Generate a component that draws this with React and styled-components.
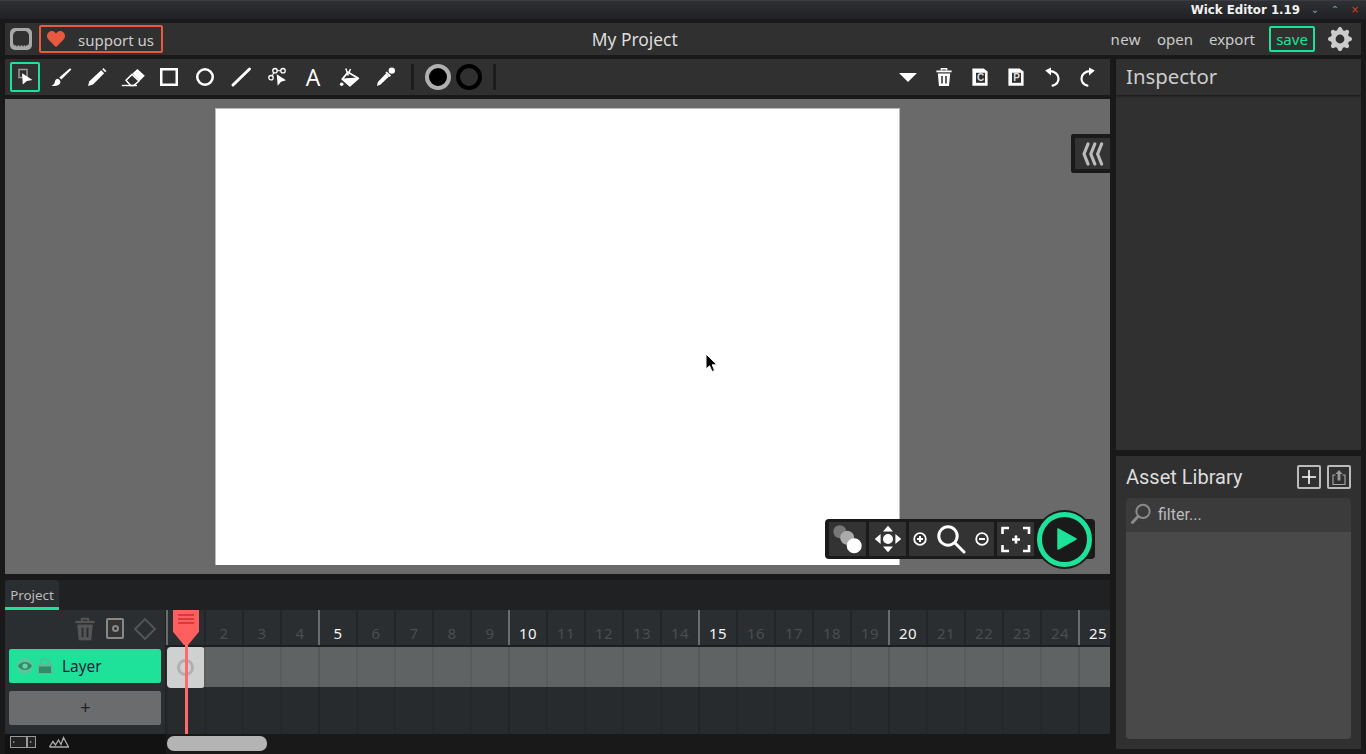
import React from "react";
import styled, { createGlobalStyle } from "styled-components";
import { FaHeart } from "react-icons/fa";
import { BsGearFill } from "react-icons/bs";

const GREEN = "#1ee29a";
const FRAMES = Array.from({ length: 25 }, (_, i) => i + 1);

const GlobalStyle = createGlobalStyle`
  html, body {
    margin: 0;
    height: 754px;
    overflow: hidden;
    background: #191919;
  }
  * { box-sizing: border-box; }
`;

function Icon({ children, w = 24, h = 24, box }) {
  return (
    <svg width={w} height={h} viewBox={box || `0 0 ${w} ${h}`} fill="none" style={{ display: "block" }}>
      {children}
    </svg>
  );
}

const SelectIcon = () => (
  <Icon>
    <rect x="6" y="4.5" width="8" height="8" stroke="#999" strokeWidth="1.5" />
    <path d="M9 8.3L19.5 15L13.8 16L9.8 19.5Z" fill="#fff" />
  </Icon>
);
const BrushIcon = () => (
  <Icon>
    <path d="M21 3.2L22.4 4.6L12.4 14.6L10.2 12.6Z" fill="#fff" />
    <path d="M9 13.8C6 14 6 16.8 5.4 18.4C5 19.3 4 19.8 2.6 20.4C5.6 21.4 9.6 21 11 18.6C11.9 17 11.4 15 9 13.8Z" fill="#fff" />
  </Icon>
);
const PencilIcon = () => (
  <Icon>
    <path d="M18.4 3L21.4 6L20.2 7.2L17.2 4.2Z" fill="#fff" />
    <path d="M16.2 5.2L19.2 8.2L8 19.6L3 21L4.4 16.2Z" fill="#fff" />
  </Icon>
);
const EraserIcon = () => (
  <Icon>
    <path d="M11.4 8.4L16.4 4L23.8 10.8L18.6 16Z" fill="#fff" />
    <path d="M11 9.4L18 16L13 20.4H9.6L5 15.2Z" stroke="#fff" strokeWidth="1.5" strokeLinejoin="round" />
    <path d="M.8 20.5H16" stroke="#fff" strokeWidth="1.4" />
  </Icon>
);
const RectIcon = () => (
  <Icon>
    <rect x="4.25" y="4.25" width="15.5" height="15.5" stroke="#fff" strokeWidth="2.5" />
  </Icon>
);
const CircleIcon = () => (
  <Icon>
    <circle cx="12" cy="12" r="7.75" stroke="#fff" strokeWidth="2.5" />
  </Icon>
);
const LineIcon = () => (
  <Icon>
    <path d="M4 20L20.5 4" stroke="#fff" strokeWidth="3" strokeLinecap="round" />
  </Icon>
);
const PathIcon = () => (
  <Icon>
    <path d="M6 12.7L10 5.7H18" stroke="#ddd" strokeWidth="1.3" />
    <circle cx="6" cy="12.7" r="2.2" fill="#303030" stroke="#fff" strokeWidth="1.3" />
    <circle cx="10" cy="5.7" r="2.2" fill="#303030" stroke="#fff" strokeWidth="1.3" />
    <circle cx="18" cy="5.7" r="2.2" fill="#303030" stroke="#fff" strokeWidth="1.3" />
    <path d="M11.7 9.3L21 15.3L16 16.7L12.7 20.7Z" fill="#fff" />
  </Icon>
);
const BucketIcon = () => (
  <Icon>
    <path d="M11 7.3L21.3 13.3L13 20.7L5.3 14Z" stroke="#fff" strokeWidth="1.8" strokeLinejoin="round" />
    <path d="M5.8 13.4L20.8 12.6L21.3 13.3L13 20.7Z" fill="#fff" />
    <path d="M11.3 10.5L8.8 3.4M11.6 8L13.6 4" stroke="#fff" strokeWidth="1.5" />
    <circle cx="4.7" cy="19.2" r="1.8" fill="#fff" />
  </Icon>
);
const DropperIcon = () => (
  <Icon>
    <circle cx="18.8" cy="5.6" r="3.2" fill="#fff" />
    <path d="M13.8 6.4L18 10.6L16.6 12L12.4 7.8Z" fill="#fff" />
    <path d="M13 8.4L16 11.4L7.6 19.6L4 21L4.8 17Z" fill="#fff" />
  </Icon>
);
const TrashIcon = ({ color = "#fff", size = 24 }) => (
  <Icon w={size} h={size} box="0 0 24 24">
    <path d="M4.4 6.4H19.6" stroke={color} strokeWidth="1.8" />
    <path d="M9.4 5.6V3.8H14.6V5.6" stroke={color} strokeWidth="1.5" />
    <path d="M5.8 8.4H18.2L17 21H7Z" fill={color} />
    <path d="M10 11V18.6M14 11V18.6" stroke="#2b2e30" strokeWidth="1.5" />
  </Icon>
);
const DocIcon = ({ letter }) => (
  <Icon>
    <path d="M4.4 3.4H15.6L19.6 6.6V20.8H4.4Z" fill="#fff" />
    <rect x="8" y="7.8" width="9" height="10" fill="#303030" />
    <text x="12.5" y="16.4" textAnchor="middle" fontFamily="'Liberation Sans', sans-serif" fontWeight="700" fontSize="10" fill="#ddd">{letter}</text>
  </Icon>
);
const UndoIcon = ({ flip }) => (
  <Icon>
    <g transform={flip ? "matrix(-1 0 0 1 24 0)" : undefined}>
      <path d="M9.5 6.2C15 6.2 18.5 9.4 18.5 13.4C18.5 16.6 16.4 19.4 12.6 20.6" stroke="#fff" strokeWidth="2.2" strokeLinecap="round" />
      <path d="M11 2.6V10.4L5.2 5.6Z" fill="#fff" />
    </g>
  </Icon>
);
const Chevrons = () => (
  <svg width="22" height="24" viewBox="0 0 22 24" fill="none">
    {[6, 12.8, 19.6].map((x) => (
      <path key={x} d={`M${x} 2L${x - 4} 12L${x} 22`} stroke="#bbb" strokeWidth="3.2" strokeLinecap="round" strokeLinejoin="round" />
    ))}
  </svg>
);
const LayersIcon = () => (
  <Icon w={34} h={34}>
    <circle cx="8.8" cy="9.7" r="6.5" fill="#777" />
    <circle cx="16.2" cy="15.7" r="7" fill="#aaa" />
    <circle cx="23.2" cy="23.7" r="7.5" fill="#fff" />
  </Icon>
);
const MoveIcon = () => (
  <Icon w={34} h={34}>
    <circle cx="17" cy="17" r="5" fill="#fff" />
    <path d="M17 3.8L22 9.6H12ZM17 30.2L22 24.4H12ZM3.8 17L9.6 12V22ZM30.2 17L24.4 12V22Z" fill="#fff" />
  </Icon>
);
const RoundSign = ({ plus }) => (
  <Icon w={14} h={14}>
    <circle cx="7" cy="7" r="5.8" stroke="#fff" strokeWidth="1.8" />
    <path d={plus ? "M4 7H10M7 4V10" : "M4 7H10"} stroke="#fff" strokeWidth="2" />
  </Icon>
);
const Magnifier = () => (
  <Icon w={30} h={30}>
    <circle cx="12" cy="12" r="9.2" stroke="#fff" strokeWidth="3" />
    <path d="M19 19L28 28" stroke="#fff" strokeWidth="3" strokeLinecap="round" />
  </Icon>
);
const RecenterIcon = () => (
  <Icon w={34} h={34}>
    <path d="M3.5 12V6H10M24 6H30V12M30 23V29H24M10 29H3.5V23" stroke="#fff" strokeWidth="2.6" />
    <path d="M13 17.5H21M17 13.5V21.5" stroke="#fff" strokeWidth="2.6" />
  </Icon>
);
const EyeIcon = () => (
  <Icon w={16} h={16}>
    <circle cx="8" cy="8" r="8" fill="#5fc49e" />
    <path d="M1 8C4.4 2.6 11.6 2.6 15 8C11.6 13.4 4.4 13.4 1 8Z" fill="#2f8c68" />
    <circle cx="8" cy="8" r="2.6" fill="#6bcfa8" />
  </Icon>
);
const LockIcon = () => (
  <Icon w={16} h={16}>
    <rect x="0.5" y="6" width="15" height="10" fill="#58bd97" />
    <rect x="2" y="8.5" width="12" height="6.5" fill="#2f8c68" />
    <path d="M4 6V3.5C4 .6 12 .6 12 3.5V6" stroke="#58bd97" strokeWidth="2" />
  </Icon>
);
const CurveIcon = () => (
  <svg width="20" height="12" viewBox="0 0 20 12" fill="none" style={{ display: "block" }}>
    <path d="M.5 11L4 5.5L6.5 9L9.5 4L12 8.5L14.5 1.5L19.5 11H.5" stroke="#aaa" strokeWidth="1.3" />
  </svg>
);
const RulerToggleIcon = () => (
  <svg width="26" height="12" viewBox="0 0 26 12" fill="none" style={{ display: "block" }}>
    <rect x=".5" y=".5" width="16" height="11" fill="#222" stroke="#999" />
    <rect x="17.5" y=".5" width="8" height="11" fill="#222" stroke="#999" />
    <path d="M3 5L5 6L3 7ZM20 5L22 6L20 7Z" fill="#aaa" />
  </svg>
);
const SearchIcon = () => (
  <svg width="22" height="22" viewBox="0 0 22 22" fill="none" style={{ display: "block" }}>
    <circle cx="13" cy="8.4" r="6.6" stroke="#8a8a8a" strokeWidth="2" />
    <path d="M8 13.4L2.4 19.4" stroke="#8a8a8a" strokeWidth="3" strokeLinecap="round" />
  </svg>
);
const UploadIcon = () => (
  <svg width="16" height="18" viewBox="0 0 16 18" fill="none" style={{ display: "block" }}>
    <path d="M4.5 7H2V16.5H14V7H11.5" stroke="#aaa" strokeWidth="1.1" />
    <path d="M8 2L11.5 6H9.4V12.5H6.6V6H4.5Z" fill="#999" />
  </svg>
);

function App() {
  const toolsBefore = [BrushIcon, PencilIcon, EraserIcon, RectIcon, CircleIcon, LineIcon, PathIcon];

  return (
    <>
      <GlobalStyle />
      <Page>
        <TitleBar>
          <AppName>Wick Editor 1.19</AppName>
          <WindowButton>⌄</WindowButton>
          <WindowButton>⌃</WindowButton>
          <WindowButton $close>×</WindowButton>
        </TitleBar>

        <Workspace>
          <MenuBar>
            <MenuGroup>
              <Logo>
                <svg width="22" height="22" viewBox="0 0 22 22">
                  <rect width="22" height="22" rx="5" fill="#a8a8a8" />
                  <path d="M8 3H14C17 3 19 5 19 8V14C19 16.5 17.5 18.5 15 18.5H7C4.5 18.5 3 16.5 3 14V8C3 5 5 3 8 3Z" fill="#303030" />
                  {[5.5, 8.5, 11.5, 14.5, 17].map((x) => (
                    <circle key={x} cx={x} cy="18.4" r="1.1" fill="#a8a8a8" />
                  ))}
                </svg>
              </Logo>
              <SupportButton>
                <FaHeart size={18} color="#e9593f" />
                <span>support us</span>
              </SupportButton>
            </MenuGroup>
            <ProjectName>My Project</ProjectName>
            <MenuGroup>
              <MenuLink>new</MenuLink>
              <MenuLink>open</MenuLink>
              <MenuLink>export</MenuLink>
              <SaveButton>save</SaveButton>
              <GearWrap>
                <BsGearFill size={24} color="#ccc" />
              </GearWrap>
            </MenuGroup>
          </MenuBar>

          <Main>
            <LeftColumn>
              <Toolbar>
                <ToolGroup>
                  <ToolButton $active><SelectIcon /></ToolButton>
                  {toolsBefore.map((Tool, i) => (
                    <ToolButton key={i}><Tool /></ToolButton>
                  ))}
                  <TextTool>A</TextTool>
                  <ToolButton><BucketIcon /></ToolButton>
                  <ToolButton><DropperIcon /></ToolButton>
                  <ToolDivider />
                  <FillSwatch />
                  <StrokeSwatch />
                  <ToolDivider />
                </ToolGroup>
                <ToolGroup>
                  <ToolButton><Caret /></ToolButton>
                  <ToolButton><TrashIcon /></ToolButton>
                  <ToolButton><DocIcon letter="C" /></ToolButton>
                  <ToolButton><DocIcon letter="P" /></ToolButton>
                  <ToolButton><UndoIcon /></ToolButton>
                  <ToolButton><UndoIcon flip /></ToolButton>
                </ToolGroup>
              </Toolbar>

              <Canvas>
                <Paper />
                <CollapseTab><Chevrons /></CollapseTab>
                <Cursor>
                  <svg width="14" height="20" viewBox="0 0 14 20">
                    <path d="M1 1V16L4.6 12.8L7 18.6L9.6 17.4L7.2 11.8H12Z" fill="#000" stroke="#fff" strokeWidth="1" />
                  </svg>
                </Cursor>
                <CanvasControls>
                  <ControlButton><LayersIcon /></ControlButton>
                  <ControlButton><MoveIcon /></ControlButton>
                  <ZoomGroup>
                    <RoundSign plus />
                    <Magnifier />
                    <RoundSign />
                  </ZoomGroup>
                  <ControlButton><RecenterIcon /></ControlButton>
                  <PlayButton>
                    <svg width="20" height="24" viewBox="0 0 20 24">
                      <path d="M1 2L19 12L1 22Z" fill={GREEN} stroke={GREEN} strokeWidth="1.5" strokeLinejoin="round" />
                    </svg>
                  </PlayButton>
                </CanvasControls>
              </Canvas>

              <Timeline>
                <TabRow>
                  <Tab>Project</Tab>
                </TabRow>
                <TimelineBody>
                  <LayerPanel>
                    <LayerActions>
                      <LayerAction><TrashIcon color="#555" size={30} /></LayerAction>
                      <FrameToggle><span /></FrameToggle>
                      <Diamond />
                    </LayerActions>
                    <LayerButton>
                      <EyeIcon />
                      <LockIcon />
                      <LayerName>Layer</LayerName>
                    </LayerButton>
                    <AddLayer>+</AddLayer>
                  </LayerPanel>

                  <Frames>
                    <Ruler>
                      {FRAMES.map((n) => (
                        <RulerCell key={n} $major={n === 1 || n % 5 === 0}>
                          {n > 1 && n}
                        </RulerCell>
                      ))}
                    </Ruler>
                    <FrameRow>
                      {FRAMES.map((n) =>
                        n === 1 ? (
                          <FilledFrame key={n}><FrameRing /></FilledFrame>
                        ) : (
                          <FrameCell key={n} $major={n % 5 === 0} />
                        )
                      )}
                    </FrameRow>
                    <EmptyRow>
                      {FRAMES.map((n) => (
                        <EmptyCell key={n} $major={n % 5 === 0} />
                      ))}
                    </EmptyRow>
                    <Playhead>
                      <PlayheadTop />
                      <PlayheadLine />
                    </Playhead>
                  </Frames>

                  <TimelineFooter>
                    <RulerToggleIcon />
                    <CurveIcon />
                  </TimelineFooter>
                  <ScrollTrack>
                    <ScrollThumb />
                  </ScrollTrack>
                </TimelineBody>
              </Timeline>
            </LeftColumn>

            <RightColumn>
              <Inspector>
                <InspectorTitle>Inspector</InspectorTitle>
              </Inspector>
              <AssetLibrary>
                <AssetHeader>
                  <AssetTitle>Asset Library</AssetTitle>
                  <AssetButtons>
                    <AssetButton>
                      <svg width="16" height="16" viewBox="0 0 16 16">
                        <path d="M8 1V15M1 8H15" stroke="#fff" strokeWidth="1.6" />
                      </svg>
                    </AssetButton>
                    <AssetButton><UploadIcon /></AssetButton>
                  </AssetButtons>
                </AssetHeader>
                <AssetSearch>
                  <SearchIcon />
                  <span>filter...</span>
                </AssetSearch>
                <AssetList />
              </AssetLibrary>
            </RightColumn>
          </Main>
        </Workspace>
      </Page>
    </>
  );
}

const Page = styled.div`
  width: 1366px;
  height: 754px;
  display: flex;
  flex-direction: column;
  overflow: hidden;
  font-family: "Noto Sans", sans-serif;
  color: #ccc;
`;

const TitleBar = styled.div`
  height: 19px;
  display: flex;
  align-items: center;
  justify-content: flex-end;
  padding-right: 1px;
  background: linear-gradient(#2e3033, #1f2124);
  border-top: 1px solid #3a3c3f;
`;

const AppName = styled.div`
  font-family: "DejaVu Sans", sans-serif;
  font-weight: 700;
  font-size: 11.8px;
  color: #f2f2f2;
  margin-right: 5px;
`;

const WindowButton = styled.div`
  width: 20px;
  text-align: center;
  font-family: "DejaVu Sans", sans-serif;
  font-size: 10px;
  line-height: 14px;
  color: ${(p) => (p.$close ? "#d8431f" : "#8aa0a8")};
`;

const Workspace = styled.div`
  flex: 1;
  display: flex;
  flex-direction: column;
  gap: 4px;
  padding: 4px 5px 0;
`;

const MenuBar = styled.div`
  height: 32px;
  display: flex;
  align-items: center;
  justify-content: space-between;
  background: #303030;
`;

const MenuGroup = styled.div`
  display: flex;
  align-items: center;
`;

const Logo = styled.div`
  margin-left: 5px;
  height: 22px;
  svg { display: block; }
`;

const SupportButton = styled.div`
  width: 124px;
  height: 28px;
  margin-left: 7px;
  display: flex;
  align-items: center;
  gap: 13px;
  padding-left: 6px;
  border: 2px solid #e9593f;
  border-radius: 2px;
  font-size: 15px;
  color: #ccc;
  span { margin-top: 2px; }
`;

const ProjectName = styled.div`
  font-size: 17.4px;
  color: #ddd;
`;

const MenuLink = styled.div`
  font-size: 15px;
  color: #ccc;
  margin-right: 16px;
  &:first-child {
    padding-left: 4px;
    letter-spacing: 0.4px;
  }
`;

const SaveButton = styled.div`
  width: 46px;
  height: 26px;
  margin-left: -2px;
  display: flex;
  align-items: center;
  justify-content: center;
  border: 2px solid ${GREEN};
  border-radius: 2px;
  font-size: 15px;
  color: ${GREEN};
`;

const GearWrap = styled.div`
  margin: 0 9px 0 13px;
  height: 24px;
`;

const Main = styled.div`
  display: flex;
  gap: 6px;
`;

const LeftColumn = styled.div`
  width: 1105px;
  display: flex;
  flex-direction: column;
`;

const Toolbar = styled.div`
  height: 36px;
  padding: 0 7px 0 5px;
  display: flex;
  align-items: center;
  justify-content: space-between;
  background: #303030;
`;

const ToolGroup = styled.div`
  display: flex;
  align-items: center;
  gap: 6px;
`;

const ToolButton = styled.div`
  width: 30px;
  height: 30px;
  display: flex;
  align-items: center;
  justify-content: center;
  border-radius: 2px;
  border: ${(p) => (p.$active ? `2px solid ${GREEN}` : "none")};
`;

const TextTool = styled.div`
  width: 30px;
  height: 30px;
  text-align: center;
  font-family: "Open Sans", sans-serif;
  font-weight: 500;
  font-size: 23px;
  line-height: 30px;
  color: #fff;
`;

const ToolDivider = styled.div`
  width: 3px;
  height: 26px;
  margin: 0 5px;
  background: #1c1c1c;
`;

const FillSwatch = styled.div`
  width: 26px;
  height: 26px;
  border-radius: 50%;
  background: #000;
  border: 4px solid #b0b0b0;
`;

const StrokeSwatch = styled.div`
  width: 26px;
  height: 26px;
  margin-left: -1px;
  border-radius: 50%;
  border: 4px solid #000;
`;

const Caret = styled.div`
  width: 0;
  height: 0;
  border-left: 9.5px solid transparent;
  border-right: 9.5px solid transparent;
  border-top: 9px solid #fff;
`;

const Canvas = styled.div`
  position: relative;
  height: 475px;
  margin-top: 4px;
  display: flex;
  align-items: center;
  justify-content: center;
  background: #6a6a6a;
`;

const Paper = styled.div`
  width: 685px;
  height: 457px;
  background: #fff;
  border: 1px solid #bbb;
  border-bottom: none;
`;

const CollapseTab = styled.div`
  position: absolute;
  top: 35px;
  right: 0;
  width: 39px;
  height: 39px;
  display: flex;
  align-items: center;
  justify-content: center;
  background: #333;
  border: 4px solid #1a1a1a;
  border-right: none;
  border-radius: 3px 0 0 3px;
`;

const Cursor = styled.div`
  position: absolute;
  left: 700px;
  top: 254px;
  height: 20px;
`;

const CanvasControls = styled.div`
  position: absolute;
  right: 15px;
  bottom: 15px;
  width: 270px;
  height: 40px;
  display: flex;
  align-items: center;
  gap: 3px;
  padding-left: 4px;
  background: #1a1a1a;
  border-radius: 4px;
`;

const ControlButton = styled.div`
  width: 37px;
  height: 34px;
  display: flex;
  align-items: center;
  justify-content: center;
  background: #333;
`;

const ZoomGroup = styled.div`
  width: 85px;
  height: 34px;
  display: flex;
  align-items: center;
  justify-content: space-between;
  padding: 0 5px 0 4px;
  background: #333;
`;

const PlayButton = styled.div`
  width: 55px;
  height: 55px;
  flex: none;
  margin: -7px 0 -7px 0;
  display: flex;
  align-items: center;
  justify-content: center;
  padding-left: 4px;
  border-radius: 50%;
  background: #1a1a1a;
  border: 5px solid ${GREEN};
  box-shadow: 0 0 0 2px #1a1a1a;
`;

const Timeline = styled.div`
  margin-top: 6px;
  display: flex;
  flex-direction: column;
`;

const TabRow = styled.div`
  height: 30px;
  background: #1f2123;
`;

const Tab = styled.div`
  width: 54px;
  height: 30px;
  padding-top: 6px;
  text-align: center;
  font-size: 13.4px;
  line-height: 18px;
  color: #bbb;
  background: #2b2e30;
  border-bottom: 3px solid ${GREEN};
  border-radius: 4px 4px 0 0;
`;

const TimelineBody = styled.div`
  display: grid;
  grid-template-columns: 161px 944px;
  grid-template-rows: 124px 20px;
`;

const LayerPanel = styled.div`
  display: flex;
  flex-direction: column;
  padding: 0 4px;
  background: #2b2e30;
  border-right: 1px solid #1f2123;
`;

const LayerActions = styled.div`
  height: 39px;
  display: flex;
  align-items: center;
  justify-content: flex-end;
  gap: 9px;
  padding: 0 4px 2px 0;
`;

const LayerAction = styled.div`
  height: 30px;
  margin-right: -3px;
`;

const FrameToggle = styled.div`
  width: 18px;
  height: 21px;
  display: flex;
  align-items: center;
  justify-content: center;
  border: 2px solid #888;
  border-radius: 2px;
  background: #333;
  span {
    width: 7px;
    height: 7px;
    border-radius: 50%;
    border: 2px solid #888;
  }
`;

const Diamond = styled.div`
  width: 16px;
  height: 16px;
  margin: 0 4px;
  transform: rotate(45deg);
  border: 2px solid #555;
`;

const LayerButton = styled.div`
  height: 34px;
  display: flex;
  align-items: center;
  gap: 4px;
  padding-left: 8px;
  background: ${GREEN};
  border-radius: 2px;
`;

const LayerName = styled.div`
  margin-left: 5px;
  font-size: 15.4px;
  color: #2a1a3a;
`;

const AddLayer = styled.div`
  height: 34px;
  margin-top: 8px;
  padding-left: 1px;
  text-align: center;
  line-height: 33px;
  font-size: 18px;
  color: #222;
  background: #6a6c6e;
  border-radius: 2px;
`;

const Frames = styled.div`
  position: relative;
  display: flex;
  flex-direction: column;
  overflow: hidden;
  background: #272b2e;
`;

const Ruler = styled.div`
  height: 37px;
  display: flex;
  border-bottom: 2px solid #1c1f21;
`;

const RulerCell = styled.div`
  flex: none;
  width: 38px;
  padding-top: 13px;
  text-align: center;
  font-size: 15px;
  letter-spacing: 0.5px;
  line-height: 20px;
  color: ${(p) => (p.$major ? "#f4f4f4" : "#4a4d4f")};
  background: #2b2e30;
  border-left: 2px solid ${(p) => (p.$major ? "#6a6c6e" : "#232628")};
`;

const FrameRow = styled.div`
  height: 40px;
  display: flex;
`;

const FrameCell = styled.div`
  flex: none;
  width: 38px;
  background: #5f6363;
  border-left: 2px solid ${(p) => (p.$major ? "#54585a" : "#585c5c")};
`;

const FilledFrame = styled.div`
  flex: none;
  width: 38px;
  height: 41px;
  margin-left: 1px;
  margin-right: -1px;
  display: flex;
  align-items: center;
  justify-content: center;
  background: #cfd0d0;
  border-radius: 4px;
`;

const FrameRing = styled.div`
  width: 17px;
  height: 17px;
  margin-left: -1px;
  border-radius: 50%;
  border: 3px solid #b0b0b0;
`;

const EmptyRow = styled.div`
  height: 47px;
  display: flex;
`;

const EmptyCell = styled.div`
  flex: none;
  width: 38px;
  border-left: 2px solid ${(p) => (p.$major ? "#212528" : "#24282b")};
`;

const Playhead = styled.div`
  position: absolute;
  left: 7px;
  top: 0;
  bottom: 0;
  width: 26px;
  display: flex;
  flex-direction: column;
  align-items: center;
`;

const PlayheadTop = styled.div`
  width: 26px;
  height: 35px;
  flex: none;
  clip-path: polygon(0 0, 100% 0, 100% 62%, 58% 100%, 42% 100%, 0 62%);
  background:
    linear-gradient(#d63a3a, #d63a3a) 5px 4px / 16px 2px no-repeat,
    linear-gradient(#d63a3a, #d63a3a) 5px 8px / 16px 2px no-repeat,
    linear-gradient(#d63a3a, #d63a3a) 5px 12px / 16px 2px no-repeat,
    #ff5f5f;
`;

const PlayheadLine = styled.div`
  width: 3px;
  flex: 1;
  background: #ff6a6a;
`;

const TimelineFooter = styled.div`
  display: flex;
  align-items: center;
  gap: 13px;
  padding: 0 0 4px 5px;
  background: #121212;
`;

const ScrollTrack = styled.div`
  padding: 2px 0 0 1px;
  background: #191919;
`;

const ScrollThumb = styled.div`
  width: 100px;
  height: 15px;
  background: #b4b4b4;
  border-radius: 7px;
`;

const RightColumn = styled.div`
  width: 245px;
  display: flex;
  flex-direction: column;
  gap: 6px;
`;

const Inspector = styled.div`
  height: 391px;
  background: #303030;
`;

const InspectorTitle = styled.div`
  height: 36px;
  padding-left: 10px;
  font-size: 20.4px;
  line-height: 34px;
  color: #ccc;
  box-shadow: 0 1px 2px #151515;
`;

const AssetLibrary = styled.div`
  height: 293px;
  display: flex;
  flex-direction: column;
  padding: 0 10px 10px;
  background: #303030;
`;

const AssetHeader = styled.div`
  height: 42px;
  display: flex;
  align-items: center;
  justify-content: space-between;
  flex: none;
`;

const AssetTitle = styled.div`
  font-family: Roboto, sans-serif;
  font-size: 20px;
  color: #ddd;
`;

const AssetButtons = styled.div`
  display: flex;
  gap: 6px;
`;

const AssetButton = styled.div`
  width: 24px;
  height: 24px;
  display: flex;
  align-items: center;
  justify-content: center;
  border: 2px solid #bbb;
  border-radius: 2px;
`;

const AssetSearch = styled.div`
  height: 34px;
  flex: none;
  display: flex;
  align-items: center;
  gap: 6px;
  padding: 0 0 2px 4px;
  font-family: Roboto, sans-serif;
  font-size: 16px;
  color: #bbb;
  background: #3b3b3b;
  border-radius: 4px 4px 0 0;
`;

const AssetList = styled.div`
  flex: 1;
  background: #494949;
  border-radius: 0 0 4px 4px;
`;

export default App;
